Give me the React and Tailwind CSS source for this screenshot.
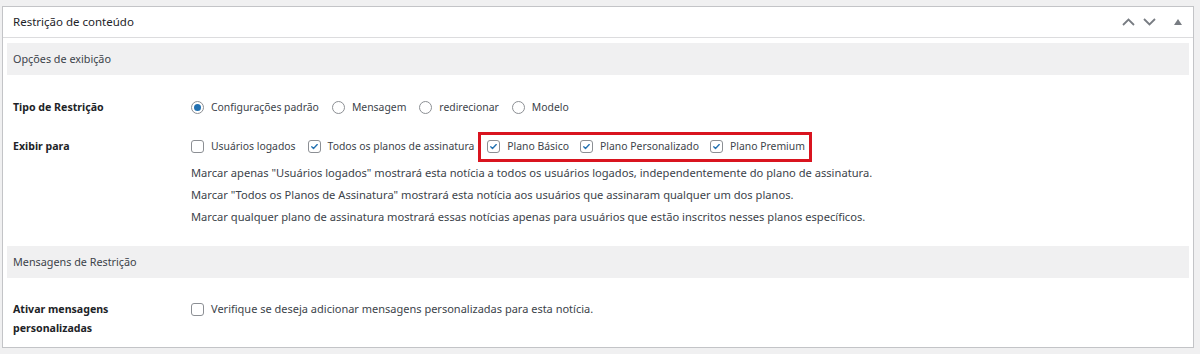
const font = { fontFamily: '"Noto Sans", "Open Sans", sans-serif' };

function Radio({ checked, label }) {
  return (
    <label className="flex items-center">
      <span className="flex h-[13px] w-[13px] items-center justify-center rounded-full border border-[#8c8f94] bg-white">
        {checked && <span className="h-[7px] w-[7px] rounded-full bg-[#2271b1]" />}
      </span>
      <span className="ml-[7px]">{label}</span>
    </label>
  );
}

function Check({ checked, label }) {
  return (
    <label className="flex items-center">
      <span className="flex h-[13px] w-[13px] items-center justify-center rounded-[3px] border border-[#8c8f94] bg-white">
        {checked && (
          <svg viewBox="0 0 20 20" className="h-[13px] w-[13px]">
            <path d="M5 10.5l3.2 3.2L15 6.5" fill="none" stroke="#2271b1" strokeWidth="2.4" strokeLinecap="round" strokeLinejoin="round" />
          </svg>
        )}
      </span>
      <span className="ml-[7px]">{label}</span>
    </label>
  );
}

export default function App() {
  return (
    <div className="h-[354px] w-[1200px] overflow-hidden bg-[#f0f0f1] pl-[2px] pt-[6px] text-[11px] text-[#3c434a]" style={font}>
      <div className="w-[1192px] border border-[#c3c4c7] bg-white">
        {/* Header */}
        <div className="flex h-[31px] items-center justify-between border-b border-[#dcdcde] pl-[10px] pr-[11px]">
          <span className="text-[11.5px] text-[#1d2327]">Restrição de conteúdo</span>
          <div className="flex items-center gap-[8px] text-[#787c82]">
            <svg viewBox="0 0 13 8" className="h-[8px] w-[13px]">
              <path d="M1 7l5.5-5.5L12 7" fill="none" stroke="currentColor" strokeWidth="1.8" />
            </svg>
            <svg viewBox="0 0 13 8" className="h-[8px] w-[13px]">
              <path d="M1 1l5.5 5.5L12 1" fill="none" stroke="currentColor" strokeWidth="1.8" />
            </svg>
            <svg viewBox="0 0 8 6" className="ml-[10px] h-[6px] w-[8px]">
              <path d="M0 6l4-6 4 6z" fill="currentColor" />
            </svg>
          </div>
        </div>

        {/* Body */}
        <div className="px-[4px] pb-[9px] pt-[5px]">
          <div className="flex h-[32px] items-center bg-[#f0f0f1] px-[6px] text-[10.8px]">Opções de exibição</div>

          <div className="mt-[23px] flex">
            <div className="w-[184px] pl-[6px] text-[10.6px] font-bold text-[#1d2327]">
              <div className="flex h-[20px] items-center">Tipo de Restrição</div>
              <div className="mt-[19px] flex h-[20px] items-center">Exibir para</div>
            </div>
            <div>
              <div className="flex h-[20px] items-center gap-[13px] text-[10.4px]">
                <Radio checked label="Configurações padrão" />
                <Radio label="Mensagem" />
                <Radio label="redirecionar" />
                <Radio label="Modelo" />
              </div>
              <div className="mt-[19px] flex h-[20px] items-center text-[10.4px]">
                <div className="flex items-center gap-[12px]">
                  <Check label="Usuários logados" />
                  <Check checked label="Todos os planos de assinatura" />
                </div>
                <div className="ml-[4px] flex h-[30px] items-center gap-[11px] border-[3px] border-[#d9141f] pl-[6px] pr-[4px]">
                  <Check checked label="Plano Básico" />
                  <Check checked label="Plano Personalizado" />
                  <Check checked label="Plano Premium" />
                </div>
              </div>
              <div className="mt-[5px] text-[11.15px] leading-[22px]">
                <p>Marcar apenas "Usuários logados" mostrará esta notícia a todos os usuários logados, independentemente do plano de assinatura.</p>
                <p>Marcar "Todos os Planos de Assinatura" mostrará esta notícia aos usuários que assinaram qualquer um dos planos.</p>
                <p>Marcar qualquer plano de assinatura mostrará essas notícias apenas para usuários que estão inscritos nesses planos específicos.</p>
              </div>
            </div>
          </div>

          <div className="mt-[18px] flex h-[32px] items-center bg-[#f0f0f1] px-[6px] text-[10.8px]">Mensagens de Restrição</div>

          <div className="mt-[22px] flex">
            <div className="w-[184px] pl-[6px] text-[10.6px] font-bold leading-[19px] text-[#1d2327]">
              Ativar mensagens
              <br />
              personalizadas
            </div>
            <div className="flex h-[19px] items-center">
              <Check label="Verifique se deseja adicionar mensagens personalizadas para esta notícia." />
            </div>
          </div>
        </div>
      </div>
    </div>
  );
}
